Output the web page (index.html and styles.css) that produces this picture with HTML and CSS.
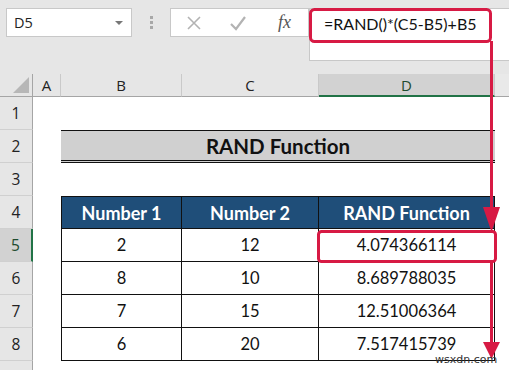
FILE: index.html
```html
<!DOCTYPE html>
<html>
<head>
<meta charset="utf-8">
<link rel="stylesheet" href="styles.css">
</head>
<body>
<div class="app">
  <div class="toolbar">
    <div class="namebox"><span>D5</span><span class="caret"></span></div>
    <div class="grip"><i></i><i></i><i></i></div>
    <div class="fbuttons">
      <svg class="ico" width="16" height="16" viewBox="0 0 16 16"><path d="M2 2 L14 14 M14 2 L2 14" stroke="#b3b3b3" stroke-width="1.6" fill="none"/></svg>
      <svg class="ico" width="18" height="16" viewBox="0 0 18 16"><path d="M2 9 L7 14 L16 2" stroke="#b3b3b3" stroke-width="2.2" fill="none"/></svg>
      <span class="fx">fx</span>
    </div>
    <div class="finput">=RAND()*(C5-B5)+B5</div>
  </div>

  <div class="sheet">
    <div class="ch corner"><span class="tri"></span></div>
    <div class="ch">A</div>
    <div class="ch">B</div>
    <div class="ch">C</div>
    <div class="ch sel-col">D</div>
    <div class="ch last"></div>

    <div class="rh">1</div><div class="cell span5"></div>

    <div class="rh">2</div><div class="cell"></div>
    <div class="title">RAND Function</div>
    <div class="cell"></div>

    <div class="rh">3</div><div class="cell span5"></div>

    <div class="rh">4</div><div class="cell"></div>
    <div class="th first top">Number 1</div>
    <div class="th top">Number 2</div>
    <div class="th top">RAND Function</div>
    <div class="cell"></div>

    <div class="rh sel-row">5</div><div class="cell"></div>
    <div class="td first">2</div><div class="td">12</div><div class="td">4.074366114</div><div class="cell"></div>

    <div class="rh">6</div><div class="cell"></div>
    <div class="td first">8</div><div class="td">10</div><div class="td">8.689788035</div><div class="cell"></div>

    <div class="rh">7</div><div class="cell"></div>
    <div class="td first">7</div><div class="td">15</div><div class="td">12.51006364</div><div class="cell"></div>

    <div class="rh">8</div><div class="cell"></div>
    <div class="td first">6</div><div class="td">20</div><div class="td">7.517415739</div><div class="cell"></div>

    <div class="rh"></div><div class="cell span5"></div>
  </div>

  <svg class="marks" width="509" height="370" viewBox="0 0 509 370">
    <rect x="310.5" y="9.5" width="180" height="32" rx="4" fill="none" stroke="#d71a44" stroke-width="3"/>
    <line x1="491.5" y1="41" x2="491.5" y2="212" stroke="#d71a44" stroke-width="3"/>
    <polygon points="483,207 500,207 491.5,232" fill="#d71a44"/>
    <rect x="318.5" y="231.5" width="177" height="30" rx="3" fill="none" stroke="#d71a44" stroke-width="3"/>
    <line x1="491.5" y1="263" x2="491.5" y2="346" stroke="#d71a44" stroke-width="3"/>
    <polygon points="483,342 500,342 491.5,359" fill="#d71a44"/>
  </svg>
  <div class="wm">wsxdn.com</div>
</div>
</body>
</html>
```
FILE: styles.css
```css
* { box-sizing: border-box; }
html, body { margin: 0; padding: 0; }
body {
  background: #e6e6e6;
  font-family: Lato, "Open Sans", sans-serif;
  width: 509px;
  height: 370px;
  overflow: hidden;
}
.app { position: relative; width: 509px; height: 370px; overflow: hidden; }

.toolbar {
  height: 74px;
  display: flex;
  align-items: flex-start;
  padding: 8px 0 0 6px;
}
.namebox {
  width: 126px;
  height: 29px;
  background: #fff;
  border: 1px solid #c8c8c8;
  display: flex;
  align-items: center;
  justify-content: space-between;
  padding: 0 8px 0 7px;
  font-family: "Open Sans", sans-serif;
  font-size: 14.5px;
  color: #222;
}
.caret {
  width: 0; height: 0;
  border-left: 4px solid transparent;
  border-right: 4px solid transparent;
  border-top: 4px solid #777;
}
.grip {
  width: 38px;
  height: 29px;
  display: flex;
  flex-direction: column;
  align-items: center;
  justify-content: center;
  gap: 2px;
}
.grip i { width: 3px; height: 3px; background: #a8a8a8; display: block; }
.fbuttons {
  width: 139px;
  height: 29px;
  background: #fff;
  border: 1px solid #c8c8c8;
  display: flex;
  align-items: center;
  padding-left: 15px;
  gap: 27px;
}
.fx {
  font-family: "Liberation Serif", serif;
  font-style: italic;
  font-size: 18px;
  color: #555;
  margin-left: 4px;
}
.finput {
  flex: 1;
  height: 53px;
  background: #fff;
  border: 1px solid #c8c8c8;
  border-right: none;
  padding: 5px 0 0 14px;
  font-family: Lato, sans-serif;
  font-size: 16px;
  color: #111;
}

.sheet {
  display: grid;
  grid-template-columns: 33px 28px 121px 137px 176px 1fr;
  grid-template-rows: 23px;
  grid-auto-rows: 33px;
  background: #fff;
}
.ch {
  background: #e6e6e6;
  border-bottom: 1px solid #a5a5a5;
  border-right: 1px solid #c9c9c9;
  display: flex;
  align-items: center;
  justify-content: center;
  font-family: "Open Sans", sans-serif;
  font-size: 15px;
  color: #222;
}
.ch.corner { position: relative; border-right: 1px solid #a5a5a5; }
.tri {
  position: absolute;
  right: 3px; bottom: 3px;
  width: 0; height: 0;
  border-left: 16px solid transparent;
  border-bottom: 16px solid #b7b7b7;
}
.ch.sel-col { background: #d2d2d2; border-bottom: 2px solid #217346; color: #1e4b2e; }
.ch.last { background: #e9e9e9; border-right: none; }

.rh {
  background: #e6e6e6;
  border-right: 1px solid #a5a5a5;
  border-bottom: 1px solid #d0d0d0;
  display: flex;
  align-items: center;
  justify-content: center;
  font-family: "Open Sans", sans-serif;
  font-size: 15.5px;
  color: #222;
}
.rh.sel-row { background: #d2d2d2; border-right: 2px solid #217346; color: #1e4b2e; }

.cell { background: #fff; }
.span5 { grid-column: span 5; }

.title {
  grid-column: span 3;
  background: #d0d0d0;
  border-top: 1px solid #111;
  border-bottom: 3px double #111;
  display: flex;
  align-items: center;
  justify-content: center;
  font-weight: 700;
  font-size: 20.5px;
  color: #111;
}

.th, .td {
  display: flex;
  align-items: center;
  justify-content: center;
  border-right: 1px solid #111;
  border-bottom: 1px solid #111;
  font-size: 16.5px;
}
.first { border-left: 1px solid #111; }
.top { border-top: 1px solid #111; }
.th {
  background: #1f4e79;
  color: #fff;
  font-weight: 700;
  font-size: 18px;
}
.td { background: #fff; color: #111; }

.marks { position: absolute; left: 0; top: 0; pointer-events: none; }
.wm {
  position: absolute;
  left: 435px;
  top: 354px;
  font-family: "DejaVu Sans", sans-serif;
  font-size: 11px;
  line-height: 12px;
  color: #333;
}
```
